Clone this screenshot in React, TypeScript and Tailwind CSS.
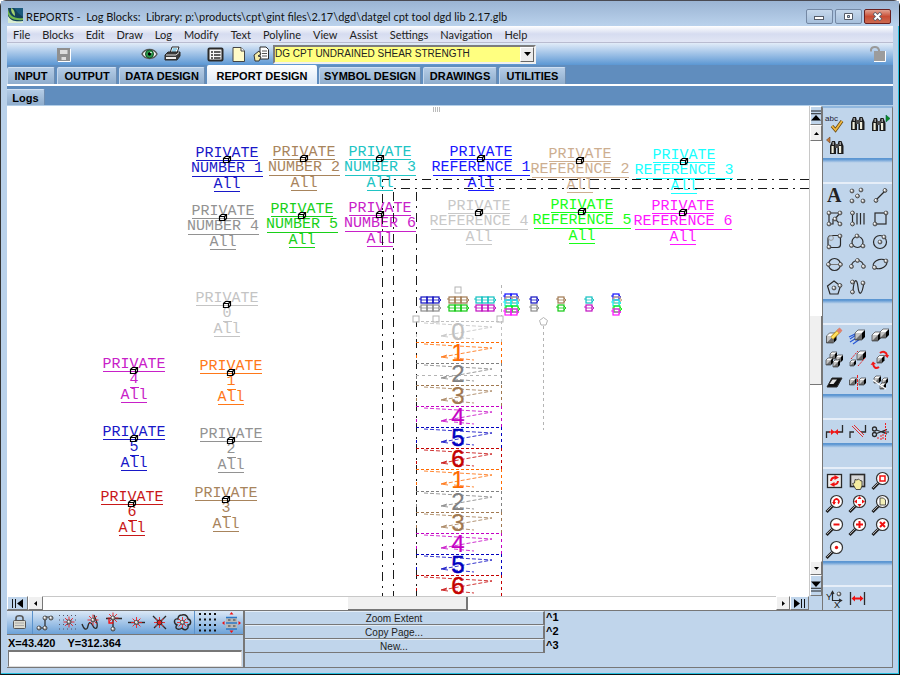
import React, { useState } from "react";

type Kids = { children?: React.ReactNode };

/* ---------- icon helpers ---------- */

const Svg = ({ children, size = 23 }: Kids & { size?: number }) => (
  <svg width={size} height={size} viewBox="0 0 23 23" fill="none" stroke="#2a2a2a" strokeWidth="1" aria-hidden="true">
    {children}
  </svg>
);

const Nodes = ({ at, r = 1.9 }: { at: number[][]; r?: number }) => (
  <g>
    {at.map(([x, y]) => (
      <g key={`${x}-${y}`}>
        <circle cx={x} cy={y} r={r} fill="#a8a8a8" stroke="#3c3c3c" strokeWidth="0.9" />
        <circle cx={x - 0.5} cy={y - 0.5} r={0.9} fill="#fff" stroke="none" />
      </g>
    ))}
  </g>
);

const Cube = ({ x, y, s = 6, d = 3 }: { x: number; y: number; s?: number; d?: number }) => (
  <g stroke="none">
    <polygon points={`${x},${y} ${x + d},${y - d} ${x + d + s},${y - d} ${x + s},${y}`} fill="#fafafa" />
    <polygon points={`${x + s},${y} ${x + s + d},${y - d} ${x + s + d},${y + s - d} ${x + s},${y + s}`} fill="#000" />
    <rect x={x} y={y} width={s} height={s} fill="#6c6c6c" />
    <polygon points={`${x},${y} ${x + s},${y} ${x},${y + s}`} fill="#c4c4c4" />
    <path
      d={`M${x} ${y}L${x + d} ${y - d}H${x + d + s}M${x} ${y}V${y + s}H${x + s}`}
      stroke="#222"
      strokeWidth="0.6"
      fill="none"
    />
  </g>
);

const Binoculars = () => (
  <g stroke="none">
    <path d="M5 10L7 5H10L11 9V18H5Z" fill="#1c1c1c" />
    <path d="M12.500 9L13.500 5H16.500L18.500 10V18H12.500Z" fill="#1c1c1c" />
    <rect x="10" y="8" width="4" height="4" fill="#4a4a4a" />
    <rect x="6.500" y="10" width="2.200" height="7" fill="#f0eedc" />
    <rect x="14" y="10" width="2.200" height="7" fill="#f0eedc" />
    <path d="M7.500 6H9V9H7.500ZM14.500 6H16V9H14.500Z" fill="#999" />
  </g>
);

const Lens = ({ children }: Kids) => (
  <Svg>
    <path d="M9.500 14L3.500 20" stroke="#222" strokeWidth="3" />
    <path d="M9 14L4 19" stroke="#bbb" strokeWidth="0.9" />
    <circle cx="13.500" cy="9.500" r="6" fill="#fff" stroke="#333" strokeWidth="1.2" />
    <g stroke="#f01010" strokeWidth="2">{children}</g>
  </Svg>
);

const Burst = ({ x = 11.5, y = 11.5 }: { x?: number; y?: number }) => (
  <g stroke="#f02020" strokeWidth="0.9">
    {[0, 45, 90, 135, 180, 225, 270, 315].map((a) => (
      <path key={a} d={`M${x + 2} ${y}H${x + 5.5}`} transform={`rotate(${a} ${x} ${y})`} />
    ))}
  </g>
);

/* ---------- tool palette ---------- */

const findTools: [string, React.ReactNode][] = [
  ["Spelling", (
    <Svg>
      <text x="2" y="9" fontSize="8" stroke="none" fill="#223" fontFamily="Liberation Sans, sans-serif">abc</text>
      <path d="M9 14L12.500 18L19 9" stroke="#6a4a10" strokeWidth="3.4" />
      <path d="M9 14L12.500 18L19 9" stroke="#f0b840" strokeWidth="1.8" />
    </Svg>
  )],
  ["Find", <Svg><Binoculars /></Svg>],
  ["Find next", <Svg><g transform="translate(-2 1)"><Binoculars /></g><path d="M17 3L21 6.500L17 10Z" fill="#0a8a20" stroke="#064" strokeWidth="0.6" /></Svg>],
  ["Find previous", <Svg><g transform="translate(2 1)"><Binoculars /></g><path d="M7 2L3.500 5L7 8Z" fill="#c87838" stroke="#642" strokeWidth="0.6" /></Svg>],
];

const drawTools: [string, React.ReactNode][] = [
  ["Text", <Svg><text x="4" y="18" fontSize="20" fontWeight="700" stroke="none" fill="#222" fontFamily="Liberation Serif, serif">A</text></Svg>],
  ["Points", <Svg><Nodes at={[[6, 7], [15, 6], [11.5, 12], [6, 17], [17, 17]]} /></Svg>],
  ["Line", <Svg><path d="M7 16L16 7" strokeWidth="1.3" /><Nodes at={[[7, 16.5], [16, 6.5]]} /></Svg>],
  ["Polyline", <Svg><path d="M6 6H17L12 12L17 17M6 6V17H10V12" strokeWidth="1.2" /><Nodes at={[[6, 6], [17, 6], [12, 12], [17, 17], [6, 17]]} /></Svg>],
  ["Hatch", <Svg><path d="M6.500 6V17M11 6V17.500M14.500 6V17.500M18 6V17.500" strokeWidth="1.2" /><Nodes at={[[6.5, 6], [6.5, 17]]} /></Svg>],
  ["Rectangle", <Svg><rect x="6" y="6" width="11" height="11" strokeWidth="1.2" /><Nodes at={[[17, 6], [6, 17]]} /></Svg>],
  ["Rounded rectangle", <Svg><rect x="5" y="5.500" width="12.500" height="12" rx="3" strokeWidth="1.2" /><circle cx="8" cy="8" r="2.400" stroke="#9a9a9a" /><Nodes at={[[17, 6], [6, 17]]} /></Svg>],
  ["Circle by three points", <Svg><circle cx="11.500" cy="12" r="5.500" strokeWidth="1.2" /><Nodes at={[[11, 6], [5.5, 15.5], [17, 16]]} /></Svg>],
  ["Circle by centre", <Svg><circle cx="11" cy="12" r="6.500" strokeWidth="1.2" /><Nodes at={[[11, 12], [15, 7]]} /></Svg>],
  ["Circle by diameter", <Svg><circle cx="11.500" cy="11.500" r="6" strokeWidth="1.2" /><path d="M5 11.500H17" stroke="#777" /><Nodes at={[[5.5, 11.5], [17.5, 11.5]]} /></Svg>],
  ["Arc", <Svg><path d="M5.500 13A6 5.500 0 0 1 17.500 13" strokeWidth="1.2" /><Nodes at={[[5.5, 13.5], [11.5, 7.5], [17.5, 13.5]]} /></Svg>],
  ["Ellipse", <Svg><ellipse cx="11" cy="11" rx="7" ry="4.500" transform="rotate(-16 11 11)" strokeWidth="1.2" /><Nodes at={[[5.5, 14.5], [17, 8]]} /></Svg>],
  ["Polygon", <Svg><path d="M11 5L17.500 10L15 18H7L4.500 10Z" strokeWidth="1.2" /><Nodes at={[[11, 12], [17, 9.5]]} /></Svg>],
  ["Spline", <Svg><path d="M7 15C8 2 11 2 12 11S16 20 18 6" strokeWidth="1.2" /><Nodes at={[[6.5, 16], [6.5, 6], [17, 7]]} /></Svg>],
];

const editTools: [string, React.ReactNode][] = [
  ["Erase", (
    <Svg>
      <Cube x={3.5} y={11} s={7} d={3} />
      <path d="M9 13L17 5" stroke="#b08010" strokeWidth="4" />
      <path d="M9 13L15 7" stroke="#ffe060" strokeWidth="2.600" />
      <path d="M15 7L18 4" stroke="#e08070" strokeWidth="4" />
    </Svg>
  )],
  ["Move", <Svg><path d="M4 14L10 10M4 17L12 12M7 19L14 14M3 12L9 9" stroke="#2858d8" strokeWidth="1.2" /><Cube x={9} y={8} s={7} d={3} /></Svg>],
  ["Copy", <Svg><Cube x={3} y={10} s={6} d={3} /><Cube x={11} y={7} s={6} d={3} /></Svg>],
  ["Array", <Svg><Cube x={7} y={6} s={5} d={2} /><Cube x={13} y={9} s={5} d={2} /><Cube x={3} y={12} s={5} d={2} /><Cube x={10} y={14} s={5} d={2} /></Svg>],
  ["Scale", <Svg><Cube x={11} y={6} s={6} d={3} /><Cube x={4} y={14} s={4} d={2} /><path d="M5 11L12 3M12 18L19 10" stroke="#e02020" strokeDasharray="2 1" /></Svg>],
  ["Rotate", (
    <Svg>
      <Cube x={8} y={10} s={5} d={2.5} />
      <path d="M11 5C14 2.500 17 4 18 7M10 19C7 21 5 20 4 16" stroke="#f01818" strokeWidth="2" />
      <path d="M15 7H20L18.500 10ZM1.500 17L4 13.500L7 16Z" fill="#f01818" stroke="none" />
    </Svg>
  )],
  ["Skew", <Svg><path d="M9 7H19L14 16H4Z" fill="#111" /><path d="M9.500 8.500H14L10.500 13H6.500Z" fill="#e4e4e4" stroke="none" /></Svg>],
  ["Mirror", <Svg><Cube x={3.5} y={9} s={5} d={2} /><Cube x={13} y={9} s={5} d={2} /><path d="M11.500 4V19" stroke="#f02020" strokeDasharray="3 1" /></Svg>],
  ["Explode", <Svg><Cube x={5} y={7} s={5} d={2} /><Cube x={13} y={9} s={4} d={2} /><Cube x={11} y={14} s={4} d={2} /><path d="M4 9L11 14L17 18" stroke="#fff" strokeWidth="1.3" /></Svg>],
];

const trimTools: [string, React.ReactNode][] = [
  ["Extend", <Svg><path d="M3.500 18V12H7M15 12H19.500V5" strokeWidth="1.3" /><path d="M6 12H17" stroke="#f01818" strokeWidth="1.3" /><path d="M8 9L11.500 12L8 15ZM15 9L11.500 12L15 15Z" fill="#f01818" stroke="none" /></Svg>],
  ["Fillet", <Svg><path d="M4 18V12H8M15 12H19.500V5" strokeWidth="1.3" /><path d="M6 6L17 17M8 5L18 15" stroke="#e03030" /></Svg>],
  ["Trim", <Svg><circle cx="5.500" cy="9" r="2" strokeWidth="1.3" /><circle cx="5.500" cy="14.500" r="2" strokeWidth="1.3" /><path d="M7.500 10L18 14M7.500 13.500L18 9.500M11 12H20" strokeWidth="1.2" /><path d="M16.500 3V20M12 15V20M9 17V20M14 14V20" stroke="#f02020" strokeDasharray="2 1" /></Svg>],
];

const zoomTools: [string, React.ReactNode][] = [
  ["Redraw", (
    <Svg>
      <rect x="4.500" y="5.500" width="14" height="13" fill="#ececec" strokeWidth="1.3" />
      <path d="M8 12A4 4 0 0 1 12 8.500M15 12A4 4 0 0 1 11 15.500" stroke="#f01010" strokeWidth="2" />
      <path d="M11.500 6L16 8.500L11.500 11ZM11.500 18L7 15.500L11.500 13Z" fill="#f01010" stroke="none" />
    </Svg>
  )],
  ["Pan", <Svg><rect x="4.500" y="5.500" width="14" height="12" fill="#d8d8d8" strokeWidth="1.6" /><path d="M9 19L6.500 14.500L8.500 14L9 10.500L11 11L12.500 10L14 11.500L16 12V17L14.500 20.500H10Z" fill="#f4eca0" strokeWidth="0.8" /></Svg>],
  ["Zoom window", <Lens><rect x="11" y="7" width="5" height="5" strokeWidth="1.5" /></Lens>],
  ["Zoom previous", <Lens><path d="M11 12V9A2.500 2.500 0 1 1 15 11.500" strokeWidth="1.800" /><path d="M9 10H13L11 13Z" fill="#f01010" stroke="none" /></Lens>],
  ["Zoom extent", <Lens><path d="M13.500 4L15.500 7H11.500ZM13.500 15L15.500 12H11.500ZM8 9.500L11 7.500V11.500ZM19 9.500L16 7.500V11.500Z" fill="#f01010" stroke="none" /></Lens>],
  ["Zoom page", <Lens><path d="M11 6H14.500L16.500 8V13H11Z" fill="#f4f0b8" stroke="#444" strokeWidth="0.9" /></Lens>],
  ["Zoom out", <Lens><path d="M10.500 9.500H16.500" /></Lens>],
  ["Zoom in", <Lens><path d="M10 9.500H17M13.500 6V13" /></Lens>],
  ["Zoom cancel", <Lens><path d="M11 7L16 12M16 7L11 12" /></Lens>],
  ["Zoom point", <Lens><circle cx="13.500" cy="9.500" r="1.700" fill="#f01010" stroke="none" /></Lens>],
];

const measureTools: [string, React.ReactNode][] = [
  ["Coordinates", (
    <Svg>
      <text x="3" y="13" fontSize="9" stroke="none" fill="#111" fontFamily="Liberation Sans, sans-serif">Y</text>
      <text x="11" y="21" fontSize="9" stroke="none" fill="#111" fontFamily="Liberation Sans, sans-serif">X</text>
      <path d="M9.500 5V13.500H18M8 7L9.500 4.500L11 7M16 12L18.500 13.500L16 15" strokeWidth="1.2" />
      <Nodes at={[[16, 7]]} />
    </Svg>
  )],
  ["Distance", <Svg><path d="M4.500 5V18M18.500 5V18" strokeWidth="1.3" /><path d="M7 11.500H16" stroke="#f01010" strokeWidth="2" /><path d="M5.500 11.500L9 8.500V14.500ZM17.500 11.500L14 8.500V14.500Z" fill="#f01010" stroke="none" /></Svg>],
];

const ToolGrid = ({ tools }: { tools: [string, React.ReactNode][] }) => (
  <div className="grid w-[69px] grid-cols-3">
    {tools.map(([name, icon]) => (
      <button key={name} type="button" aria-label={name} title={name} className="block h-[23px] w-[23px]">
        {icon}
      </button>
    ))}
  </div>
);

const PaletteGap = () => (
  <div className="h-[26px] border-b-2 border-[#e6eef8] bg-linear-to-b from-[#5b96d2] from-5% to-[#c0d5eb] to-20%" />
);

/* ---------- drawing canvas ---------- */

const labels: [number, number, string, string][] = [
  [227, 160, "NUMBER 1", "#1818c8"],
  [304, 159, "NUMBER 2", "#a8845c"],
  [380, 159, "NUMBER 3", "#20c4c4"],
  [223, 218, "NUMBER 4", "#929292"],
  [302, 216, "NUMBER 5", "#18d018"],
  [380, 215, "NUMBER 6", "#c820c8"],
  [481, 159, "REFERENCE 1", "#1818ff"],
  [580, 161, "REFERENCE 2", "#cdae90"],
  [684, 162, "REFERENCE 3", "#18ffff"],
  [479, 213, "REFERENCE 4", "#c8c8c8"],
  [582, 212, "REFERENCE 5", "#18ff18"],
  [683, 213, "REFERENCE 6", "#ff18ff"],
  [227, 305, "0", "#c4c4c4"],
  [134, 371, "4", "#c820c8"],
  [134, 439, "5", "#1818c8"],
  [132, 504, "6", "#c81818"],
  [231, 373, "1", "#ff7818"],
  [231, 441, "2", "#929292"],
  [226, 500, "3", "#a8845c"],
];

const ruleWidth = (s: string) => (s.length > 9 ? 97 : s.length > 1 ? 71 : 9);

const BlockLabel = ({ x, y, name, color }: { x: number; y: number; name: string; color: string }) => {
  const w = ruleWidth(name) / 2;
  return (
    <g fill={color} textAnchor="middle" fontSize="15" fontFamily="Liberation Mono, monospace">
      <text x={x} y={y - 3}>PRIVATE</text>
      <text x={x} y={y + 12}>{name}</text>
      <text x={x} y={y + 28}>All</text>
      <path
        d={`M${x - 31} ${y + 0.5}H${x + 31}M${x - w} ${y + 16.5}H${x + w}M${x - 13} ${y + 31.5}H${x + 13}`}
        stroke={color}
        shapeRendering="crispEdges"
      />
      <path
        d={`M${x - 3.5} ${y - 1.5}H${x + 1.5}V${y + 2.5}H${x - 3.5}ZM${x - 3.5} ${y - 1.5}L${x - 1.5} ${y - 3.5}H${x + 3.5}V${y + 0.5}L${x + 1.5} ${y + 2.5}M${x + 1.5} ${y - 1.5}L${x + 3.5} ${y - 3.5}`}
        fill="none"
        stroke="#000"
        strokeWidth="1.2"
      />
    </g>
  );
};

const layers: [string, string][] = [
  ["0", "#c0c0c0"],
  ["1", "#ff6a00"],
  ["2", "#808080"],
  ["3", "#a07850"],
  ["4", "#c400c4"],
  ["5", "#0000c0"],
  ["6", "#c40000"],
  ["1", "#ff6a00"],
  ["2", "#808080"],
  ["3", "#a07850"],
  ["4", "#c400c4"],
  ["5", "#0000c0"],
  ["6", "#c40000"],
];

const LayerRow = ({ i, n, color }: { i: number; n: string; color: string }) => {
  const top = 321 + Math.round(i * 21.2);
  return (
    <g fill="none" stroke={color}>
      <path d={`M416 ${top + 0.5}H501`} strokeDasharray="3 2" />
      <path d={`M501.500 ${top}V${top + 21}M416.500 ${top + 13}V${top + 19}`} strokeDasharray="3 3" />
      <path d={`M424 ${top + 2}L492 ${top + 6}L442 ${top + 15}M454 ${top + 16}L474 ${top + 18}`} strokeDasharray="4 2" strokeWidth="0.8" />
      <path d={`M447 ${top + 13}L441 ${top + 15}L448 ${top + 16}`} strokeWidth="0.8" />
      <text x="458" y={top + 19} fontSize="24" textAnchor="middle" fill={color} strokeWidth={n === "5" || n === "6" ? 0.5 : 0.2} fontFamily="Liberation Sans, sans-serif">
        {n}
      </text>
    </g>
  );
};

const Marker = ({ x, y, color, cells = 1 }: { x: number; y: number; color: string; cells?: number }) => (
  <g stroke={color} fill="none" strokeWidth="1.2">
    {Array.from({ length: cells }, (_, k) => (
      <g key={k}>
        <rect x={x + k * 6} y={y} width="6" height="6" />
        <path d={`M${x + k * 6} ${y + 3}H${x + k * 6 + 6}`} strokeWidth="0.8" />
      </g>
    ))}
    <path d={`M${x - 2} ${y + 2}H${x}M${x + cells * 6} ${y + 1}L${x + cells * 6 + 2} ${y + 3}L${x + cells * 6} ${y + 5}`} strokeWidth="0.9" />
  </g>
);

const Cluster = ({ x, cells }: { x: number; cells: number }) => (
  <g>
    <Marker x={x} y={294} color="#1010ff" cells={cells} />
    <Marker x={x + 1} y={297} color="#c8a888" cells={cells} />
    <Marker x={x} y={300} color="#10f0f0" cells={cells} />
    <Marker x={x + 1} y={306} color="#10e810" cells={cells} />
    <Marker x={x} y={309} color="#ff10ff" cells={cells} />
  </g>
);

const Canvas = () => (
  <svg className="absolute inset-0 h-full w-full" role="img" aria-label="Log block drawing">
    <g transform="translate(-7 -106)">
      {labels.map(([x, y, name, color]) => (
        <BlockLabel key={name + x} x={x} y={y} name={name} color={color} />
      ))}
      <g stroke="#1a1a1a" fill="none" strokeDasharray="9 5 2 5">
        <path d="M809 179.500H382.500V600" />
        <path d="M809 188.500H393.500" />
        <path d="M393.500 192V600" />
        <path d="M416.500 192V600" />
      </g>
      <g stroke="#b4b4b4" fill="none">
        <path d="M501.500 285V321M416 375.500H501M543.500 326V430" strokeDasharray="3 3" />
        <g fill="#fff">
          <rect x="455" y="287" width="6" height="6" />
          <rect x="413" y="316" width="6" height="6" />
          <rect x="433" y="316" width="6" height="6" />
          <rect x="497" y="316" width="6" height="6" />
          <path d="M543.500 317.500L547.500 320.500L546 325H541L539.500 320.500Z" />
        </g>
      </g>
      {layers.map(([n, color], i) => (
        <LayerRow key={i} i={i} n={n} color={color} />
      ))}
      <Marker x={421} y={297} color="#1010c0" cells={3} />
      <Marker x={421} y={305} color="#8a8a8a" cells={3} />
      <Marker x={449} y={297} color="#a07850" cells={3} />
      <Marker x={449} y={305} color="#10c810" cells={3} />
      <Marker x={476} y={297} color="#10c0c0" cells={3} />
      <Marker x={476} y={305} color="#c010c0" cells={3} />
      <Cluster x={505} cells={2} />
      <Marker x={531} y={297} color="#1010c0" />
      <Marker x={531} y={305} color="#8a8a8a" />
      <Marker x={558} y={297} color="#a07850" />
      <Marker x={558} y={305} color="#10c810" />
      <Marker x={586} y={297} color="#10c0c0" />
      <Marker x={586} y={305} color="#c010c0" />
      <Cluster x={613} cells={1} />
      <path d="M433.500 107V112M435.500 107V112M437.500 107V112M439.500 107V112" stroke="#bbb" />
    </g>
  </svg>
);

/* ---------- window parts ---------- */

const TitleBar = () => (
  <header className="flex h-[25px] items-start bg-linear-to-b from-[#9bb4d3] to-[#bad2ec] pt-[7px] pr-[8px] pl-[7px]">
    <svg width="15" height="15" viewBox="0 0 15 15" className="shrink-0" aria-hidden="true">
      <rect width="15" height="15" fill="#12405a" />
      <path d="M6 0H15V9L10 5Z" fill="#1b5a7c" />
      <path d="M0 0C1 8 6 11 15 10V12C6 13 1 10 0 6Z" fill="#72b84c" />
      <path d="M0 8C3 13 8 14 15 13V15H0Z" fill="#d8ecd0" />
      <path d="M3 0C6 1 7 4 7 8C4 6 3 4 3 0Z" fill="#a4d070" />
    </svg>
    <h1 className="ml-[3px] font-[Lato,sans-serif] text-[11px] leading-[17px] whitespace-pre text-[#111]">
      {"REPORTS -  Log Blocks:  Library: p:\\products\\cpt\\gint files\\2.17\\dgd\\datgel cpt tool dgd lib 2.17.glb"}
    </h1>
    <div className="mt-px ml-auto flex gap-[2px]">
      <button type="button" aria-label="Minimize" className="flex h-[15px] w-[27px] items-center justify-center rounded-[2px] border border-[#7488a4] bg-linear-to-b from-[#c6d8ec] to-[#a6bfdb]">
        <svg width="11" height="9" viewBox="0 0 11 9"><rect x="0.500" y="4.500" width="9" height="3" fill="#fff" stroke="#555c68" /></svg>
      </button>
      <button type="button" aria-label="Maximize" className="flex h-[15px] w-[27px] items-center justify-center rounded-[2px] border border-[#7488a4] bg-linear-to-b from-[#c6d8ec] to-[#a6bfdb]">
        <svg width="11" height="9" viewBox="0 0 11 9"><path d="M1.500 1.500H9.500V7.500H1.500ZM4.500 3.500V5.500H6.500V3.500Z" fill="#fff" fillRule="evenodd" stroke="#555c68" /></svg>
      </button>
      <button type="button" aria-label="Close" className="flex h-[15px] w-[27px] items-center justify-center rounded-[2px] border border-[#6a2020] bg-linear-to-b from-[#e0a090] via-[#c84c34] to-[#cc6a50]">
        <svg width="11" height="9" viewBox="0 0 11 9"><path d="M2 1L9 8M9 1L2 8" stroke="#555c68" strokeWidth="3.600" /><path d="M2.500 1.500L8.500 7.500M8.500 1.500L2.500 7.500" stroke="#fff" strokeWidth="2" /></svg>
      </button>
    </div>
  </header>
);

const menus = ["File", "Blocks", "Edit", "Draw", "Log", "Modify", "Text", "Polyline", "View", "Assist", "Settings", "Navigation", "Help"];

const MenuBar = () => (
  <nav className="flex h-[17px] gap-[12px] border-b border-[#b9bcd0] bg-linear-to-b from-white via-[#d6dcf0] to-[#e2e6f5] pl-[6px] font-[Lato,sans-serif] text-[11px] leading-[18px] text-[#222]">
    {menus.map((m) => (
      <button key={m} type="button">{m}</button>
    ))}
  </nav>
);

const sources = ["DG CPT UNDRAINED SHEAR STRENGTH"];

const ToolBar = () => (
  <div className="flex h-[22px] items-center bg-linear-to-b from-[#e2ecf8] to-[#5b97d3] pl-[45px] pr-[4px]">
    <button type="button" aria-label="Save" className="mr-[63px] w-[23px]">
      <Svg>
        <rect x="5" y="5" width="13" height="13" fill="#8f8f8f" stroke="none" />
        <path d="M8 7H15.500V11H8ZM9.500 14H14V17H9.500Z" fill="#ddd" stroke="none" />
        <path d="M18.500 6V18.500H6" stroke="#fff" />
      </Svg>
    </button>
    <button type="button" aria-label="Preview" className="w-[23px]">
      <Svg>
        <path d="M4 11C7 5 16 5 19 11C16 17 7 17 4 11Z" fill="#f2f2f2" stroke="#555" strokeWidth="1.4" />
        <circle cx="11.500" cy="11" r="4" fill="#2a9a4a" stroke="#155028" />
        <circle cx="11.500" cy="11" r="1.700" fill="#000" stroke="none" />
        <circle cx="13" cy="9.500" r="0.800" fill="#fff" stroke="none" />
      </Svg>
    </button>
    <button type="button" aria-label="Print" className="mr-[20px] w-[23px]">
      <Svg>
        <path d="M9 10L11 4H18L16 10Z" fill="#fff" />
        <path d="M11.500 6H16M11 8H15" stroke="#2aa0d0" />
        <path d="M4 12L7 9H19V13L16 17H4Z" fill="#3a3a3a" />
        <path d="M5 12H15L18 9.500" stroke="#ddd" />
        <rect x="5" y="14" width="10" height="2" fill="#eee" stroke="none" />
      </Svg>
    </button>
    <button type="button" aria-label="Properties" className="w-[23px]">
      <Svg>
        <rect x="4.500" y="5.500" width="14" height="12" rx="1" fill="#f6f6f6" strokeWidth="2" />
        <path d="M7 9H9M7 12H9M7 15H9M10 9H16.500M10 12H16.500M10 15H16.500" strokeWidth="1.300" />
      </Svg>
    </button>
    <button type="button" aria-label="New page" className="w-[23px]">
      <Svg>
        <path d="M6 4.500H14L17.500 8V18.500H6Z" fill="#fffbc8" stroke="#444" />
        <path d="M14 4.500V8H17.500" fill="#fff" stroke="#444" />
      </Svg>
    </button>
    <button type="button" aria-label="Select page" className="w-[23px]">
      <Svg>
        <path d="M10 4H16L18.500 6.500V16H10Z" fill="#fff" />
        <path d="M12 8H17M12 10.500H17M12 13H17" stroke="#555" />
        <path d="M4 12L9 8L11 11L8 13L11 14L9 18H5Z" fill="#f4eca8" stroke="#333" />
      </Svg>
    </button>
    <div className="relative flex h-[19px] w-[263px] border-2 border-t-[#7c7c7c] border-r-[#f0f0f0] border-b-[#f0f0f0] border-l-[#7c7c7c] bg-[#ffff80]">
      <select aria-label="Report" className="w-full appearance-none bg-transparent font-['Liberation_Sans',sans-serif] text-[10px] leading-[14px] text-[#222]">
        {sources.map((s) => (
          <option key={s}>{s}</option>
        ))}
      </select>
      <span className="pointer-events-none absolute inset-y-0 right-0 flex w-[14px] items-center justify-center border border-t-white border-r-[#666] border-b-[#666] border-l-white bg-[#ececec]">
        <svg width="7" height="4" viewBox="0 0 7 4"><path d="M0 0H7L3.500 4Z" /></svg>
      </span>
    </div>
    <button type="button" aria-label="Unlock" className="ml-auto w-[23px]">
      <Svg>
        <path d="M5 8.500V6.500C6 3 12 3 13 7V8" stroke="#999" strokeWidth="2" />
        <rect x="8" y="8" width="11" height="10" fill="#9c9c9c" stroke="none" />
        <path d="M19.500 8V18.500H8" stroke="#fff" />
      </Svg>
    </button>
  </div>
);

const tabs: [string, string][] = [
  ["INPUT", "w-[48px]"],
  ["OUTPUT", "w-[60px]"],
  ["DATA DESIGN", "w-[86px]"],
  ["REPORT DESIGN", "w-[110px]"],
  ["SYMBOL DESIGN", "w-[102px]"],
  ["DRAWINGS", "w-[74px]"],
  ["UTILITIES", "w-[67px]"],
];

const Tabs = () => {
  const [active, setActive] = useState("REPORT DESIGN");
  return (
    <div role="tablist" className="flex h-[21px] items-end gap-[2px] border-b-2 border-white bg-[#608dbe] font-['Liberation_Sans',sans-serif] text-[11px] font-bold text-black">
      {tabs.map(([t, w]) => (
        <button
          key={t}
          type="button"
          role="tab"
          aria-selected={t === active}
          onClick={() => setActive(t)}
          className={`${w} shrink-0 whitespace-nowrap rounded-t-[2px] ${
            t === active
              ? "h-[19px] bg-linear-to-b from-white to-[#dce8f6] pt-[3px]"
              : "h-[17px] border-t border-r border-l border-t-[#d0e0f2] border-r-[#6d8cb0] border-l-[#c4d8ee] bg-linear-to-b from-[#b4cce6] to-[#8fadcd]"
          }`}
        >
          {t}
        </button>
      ))}
    </div>
  );
};

const bevel = "flex shrink-0 items-center justify-center border border-t-white border-r-[#777] border-b-[#777] border-l-white";

const VScroll = () => (
  <div className="flex w-[13px] shrink-0 flex-col border-l border-[#c8c8c8] bg-white">
    <button type="button" aria-label="First row" className={`${bevel} h-[19px] bg-[#c0d5eb]`}>
      <svg width="11" height="14" viewBox="0 0 11 14"><path d="M0 1.500H11M0 4.500H11" stroke="#111" /><path d="M0 12L5.500 6L11 12Z" /></svg>
    </button>
    <button type="button" aria-label="Scroll up" className={`${bevel} h-[16px] bg-[#f0f0f0]`}>
      <svg width="5" height="3" viewBox="0 0 5 3"><path d="M0 3L2.500 0L5 3Z" /></svg>
    </button>
    <div className="flex flex-1 flex-col">
      <div className="basis-[175px]" />
      <div className="h-[69px] border-r border-b border-[#777] bg-[#f0f0f0]" />
    </div>
    <button type="button" aria-label="Scroll down" className={`${bevel} h-[14px] bg-[#f0f0f0]`}>
      <svg width="5" height="3" viewBox="0 0 5 3"><path d="M0 0L2.500 3L5 0Z" /></svg>
    </button>
    <button type="button" aria-label="Last row" className={`${bevel} h-[21px] bg-[#c0d5eb]`}>
      <svg width="11" height="14" viewBox="0 0 11 14"><path d="M0 9.500H11M0 12.500H11" stroke="#111" /><path d="M0 2L5.500 8L11 2Z" /></svg>
    </button>
  </div>
);

const HScroll = () => (
  <div className="flex h-[14px] bg-white">
    <button type="button" aria-label="First column" className={`${bevel} w-[21px] bg-[#c0d5eb]`}>
      <svg width="13" height="9" viewBox="0 0 13 9"><path d="M1.500 0V9M4.500 0V9" stroke="#111" /><path d="M12 0L6 4.500L12 9Z" /></svg>
    </button>
    <button type="button" aria-label="Scroll left" className={`${bevel} w-[15px] bg-[#f0f0f0]`}>
      <svg width="3" height="5" viewBox="0 0 3 5"><path d="M3 0L0 2.500L3 5Z" /></svg>
    </button>
    <div className="flex flex-1 border-t border-[#c8c8c8]">
      <div className="basis-[305px]" />
      <div className="w-[120px] border-r-2 border-b border-[#777] bg-[#f0f0f0]" />
    </div>
    <button type="button" aria-label="Scroll right" className={`${bevel} w-[14px] bg-[#f0f0f0]`}>
      <svg width="3" height="5" viewBox="0 0 3 5"><path d="M0 0L3 2.500L0 5Z" /></svg>
    </button>
    <button type="button" aria-label="Last column" className={`${bevel} w-[19px] bg-[#c0d5eb]`}>
      <svg width="13" height="9" viewBox="0 0 13 9"><path d="M8.500 0V9M11.500 0V9" stroke="#111" /><path d="M1 0L7 4.500L1 9Z" /></svg>
    </button>
    <div className="w-[13px] bg-[#c0d5eb]" />
  </div>
);

const snaps: [string, React.ReactNode][] = [
  ["Snap endpoint", <Svg><path d="M6 17H12V6H17" strokeWidth="1.200" /><Nodes at={[[6, 17], [12, 17], [12, 7], [18, 7]]} r={2} /></Svg>],
  ["Snap grid", <Svg><path d="M3 4.500H21M3 9H21M3 13.500H21M3 18H21" stroke="#556" strokeDasharray="1 3" /><Burst x={13} y={11} /><Nodes at={[[13, 11]]} r={2} /></Svg>],
  ["Snap nearest", <Svg><path d="M3 13C5 19 8 20 9 15S12 11 14 15S19 18 18 12L15 4" strokeWidth="1.300" /><Burst x={14} y={9} /><Nodes at={[[14, 9]]} /></Svg>],
  ["Snap perpendicular", <Svg><path d="M4 7.500H20M11 7V19" strokeWidth="1.300" /><path d="M7 8V12H11" stroke="#f01010" strokeWidth="1.300" /><Burst x={11} y={7} /><Nodes at={[[11, 7], [11, 18]]} r={2} /></Svg>],
  ["Snap midpoint", <Svg><path d="M3 11.500H20" strokeWidth="1.400" /><Burst /><Nodes at={[[11.5, 11.5]]} r={2} /></Svg>],
  ["Snap intersection", <Svg><path d="M5 5L18 18M18 5L6 17" strokeWidth="1.300" /><Burst /><circle cx="11.500" cy="11.500" r="2.500" fill="#e02020" /></Svg>],
  ["Snap centroid", <Svg><path d="M11 4C15 3 17 6 17 8C21 9 20 14 17 14C18 19 13 20 11 17C7 20 3 17 6 14C2 12 3 7 7 8C7 6 8 4 11 4Z" strokeWidth="1.400" /><Burst /><Nodes at={[[11.5, 11.5]]} r={2} /></Svg>],
];

const commands = ["Zoom Extent", "Copy Page...", "New..."];

const StatusPanel = () => (
  <footer className="flex h-[58px] border-y border-r border-[#777] bg-[#c0d5eb]">
    <div className="flex w-[238px] shrink-0 flex-col border-r-2 border-[#777]">
      <div className="flex h-[24px] items-center border-b border-[#777] bg-linear-to-b from-[#dbe8f6] to-[#6ca2d8]">
        <button type="button" aria-label="Lock" className="h-full w-[26px] border-r border-[#5a92cc] pl-px">
          <Svg>
            <path d="M8 10V7C8 4 15 4 15 7V10" stroke="#555" strokeWidth="1.600" />
            <rect x="5.500" y="9.500" width="12" height="8" rx="1" fill="#dcdcd0" stroke="#555" />
            <path d="M7 12H16M7 14.500H16" stroke="#aaa" />
          </Svg>
        </button>
        {snaps.map(([name, icon]) => (
          <button key={name} type="button" aria-label={name} className="w-[23px]">{icon}</button>
        ))}
        <button type="button" aria-label="Grid" className="h-full w-[26px] border-l border-[#5a92cc] pl-[2px]">
          <Svg><path d="M2 3H22M2 8.500H22M2 14H22M2 19.500H22" stroke="#111" strokeWidth="2" strokeDasharray="2 3" /></Svg>
        </button>
        <button type="button" aria-label="Layer view" className="w-[23px]">
          <Svg>
            <rect x="6" y="6" width="11" height="12" fill="#b8b8b8" stroke="none" />
            <path d="M6 6.500H17M6 12H17M6 18H17" stroke="#2a78c8" strokeWidth="1.600" />
            <path d="M8 9H10.500M13 9H15.500M8 15H10.500M13 15H15.500" stroke="#666" strokeWidth="1.500" />
            <path d="M11.500 1L13.500 3.500H9.500ZM11.500 22L13.500 19.500H9.500ZM2 12L4.500 10V14ZM21 12L18.500 10V14Z" fill="#f01010" stroke="none" />
          </Svg>
        </button>
      </div>
      <label htmlFor="command" className="block h-[15px] pl-px font-['Liberation_Sans',sans-serif] text-[11px] leading-[16px] font-bold whitespace-pre">
        {"X=43.420    Y=312.364"}
      </label>
      <input id="command" className="mx-px h-[17px] border border-t-2 border-t-[#777] border-r-[#ddd] border-b-[#ddd] border-l-[#777] bg-white px-1 text-[11px] outline-none" />
    </div>
    <div className="flex flex-1 flex-col">
      {commands.map((c, i) => (
        <div key={c} className="flex h-[14px] font-['Liberation_Sans',sans-serif]">
          <button type="button" className="w-[300px] border-t border-r-2 border-b border-t-[#e4eef8] border-r-[#777] border-b-[#777] text-[10px] leading-[13px] text-[#222]">
            {c}
          </button>
          <span className="pl-px text-[11px] leading-[13px] font-bold text-black">{`^${i + 1}`}</span>
        </div>
      ))}
    </div>
  </footer>
);

export default function App() {
  return (
    <div className="flex min-h-screen flex-col rounded-t-[6px] border border-t-2 border-t-[#4a4a52] border-r-[#111] border-b-[#111] border-l-[#333] bg-[#b9d1ea] shadow-[inset_-1px_-1px_0_#28c0e0]">
      <div className="-mt-px">
        <TitleBar />
      </div>
      <main className="mr-[6px] mb-[6px] ml-[6px] flex flex-1 flex-col">
        <MenuBar />
        <ToolBar />
        <Tabs />
        <div className="flex h-[20px] items-start border-b border-[#b4cfe8] bg-[#608dbe] pt-[3px]">
          <button type="button" className="h-[16px] w-[38px] rounded-tr-[2px] border-t border-r border-t-[#d0e0f2] border-r-[#6d8cb0] bg-linear-to-b from-[#b4cce6] to-[#8fadcd] font-['Liberation_Sans',sans-serif] text-[11px] leading-[14px] font-bold">
            Logs
          </button>
        </div>
        <div className="flex flex-1">
          <div className="flex min-w-0 flex-1 flex-col">
            <div className="flex flex-1">
              <div className="relative flex-1 overflow-hidden bg-white">
                <Canvas />
              </div>
              <VScroll />
            </div>
            <HScroll />
          </div>
          <aside className="w-[71px] shrink-0 border-t-2 border-r border-l border-t-[#8fb6de] border-r-[#777] border-l-[#777] bg-[#c0d5eb]">
            <div className="pt-[4px]">
              <ToolGrid tools={findTools} />
            </div>
            <PaletteGap />
            <ToolGrid tools={drawTools} />
            <PaletteGap />
            <ToolGrid tools={editTools} />
            <PaletteGap />
            <ToolGrid tools={trimTools} />
            <PaletteGap />
            <ToolGrid tools={zoomTools} />
            <PaletteGap />
            <ToolGrid tools={measureTools} />
          </aside>
        </div>
        <StatusPanel />
      </main>
    </div>
  );
}
